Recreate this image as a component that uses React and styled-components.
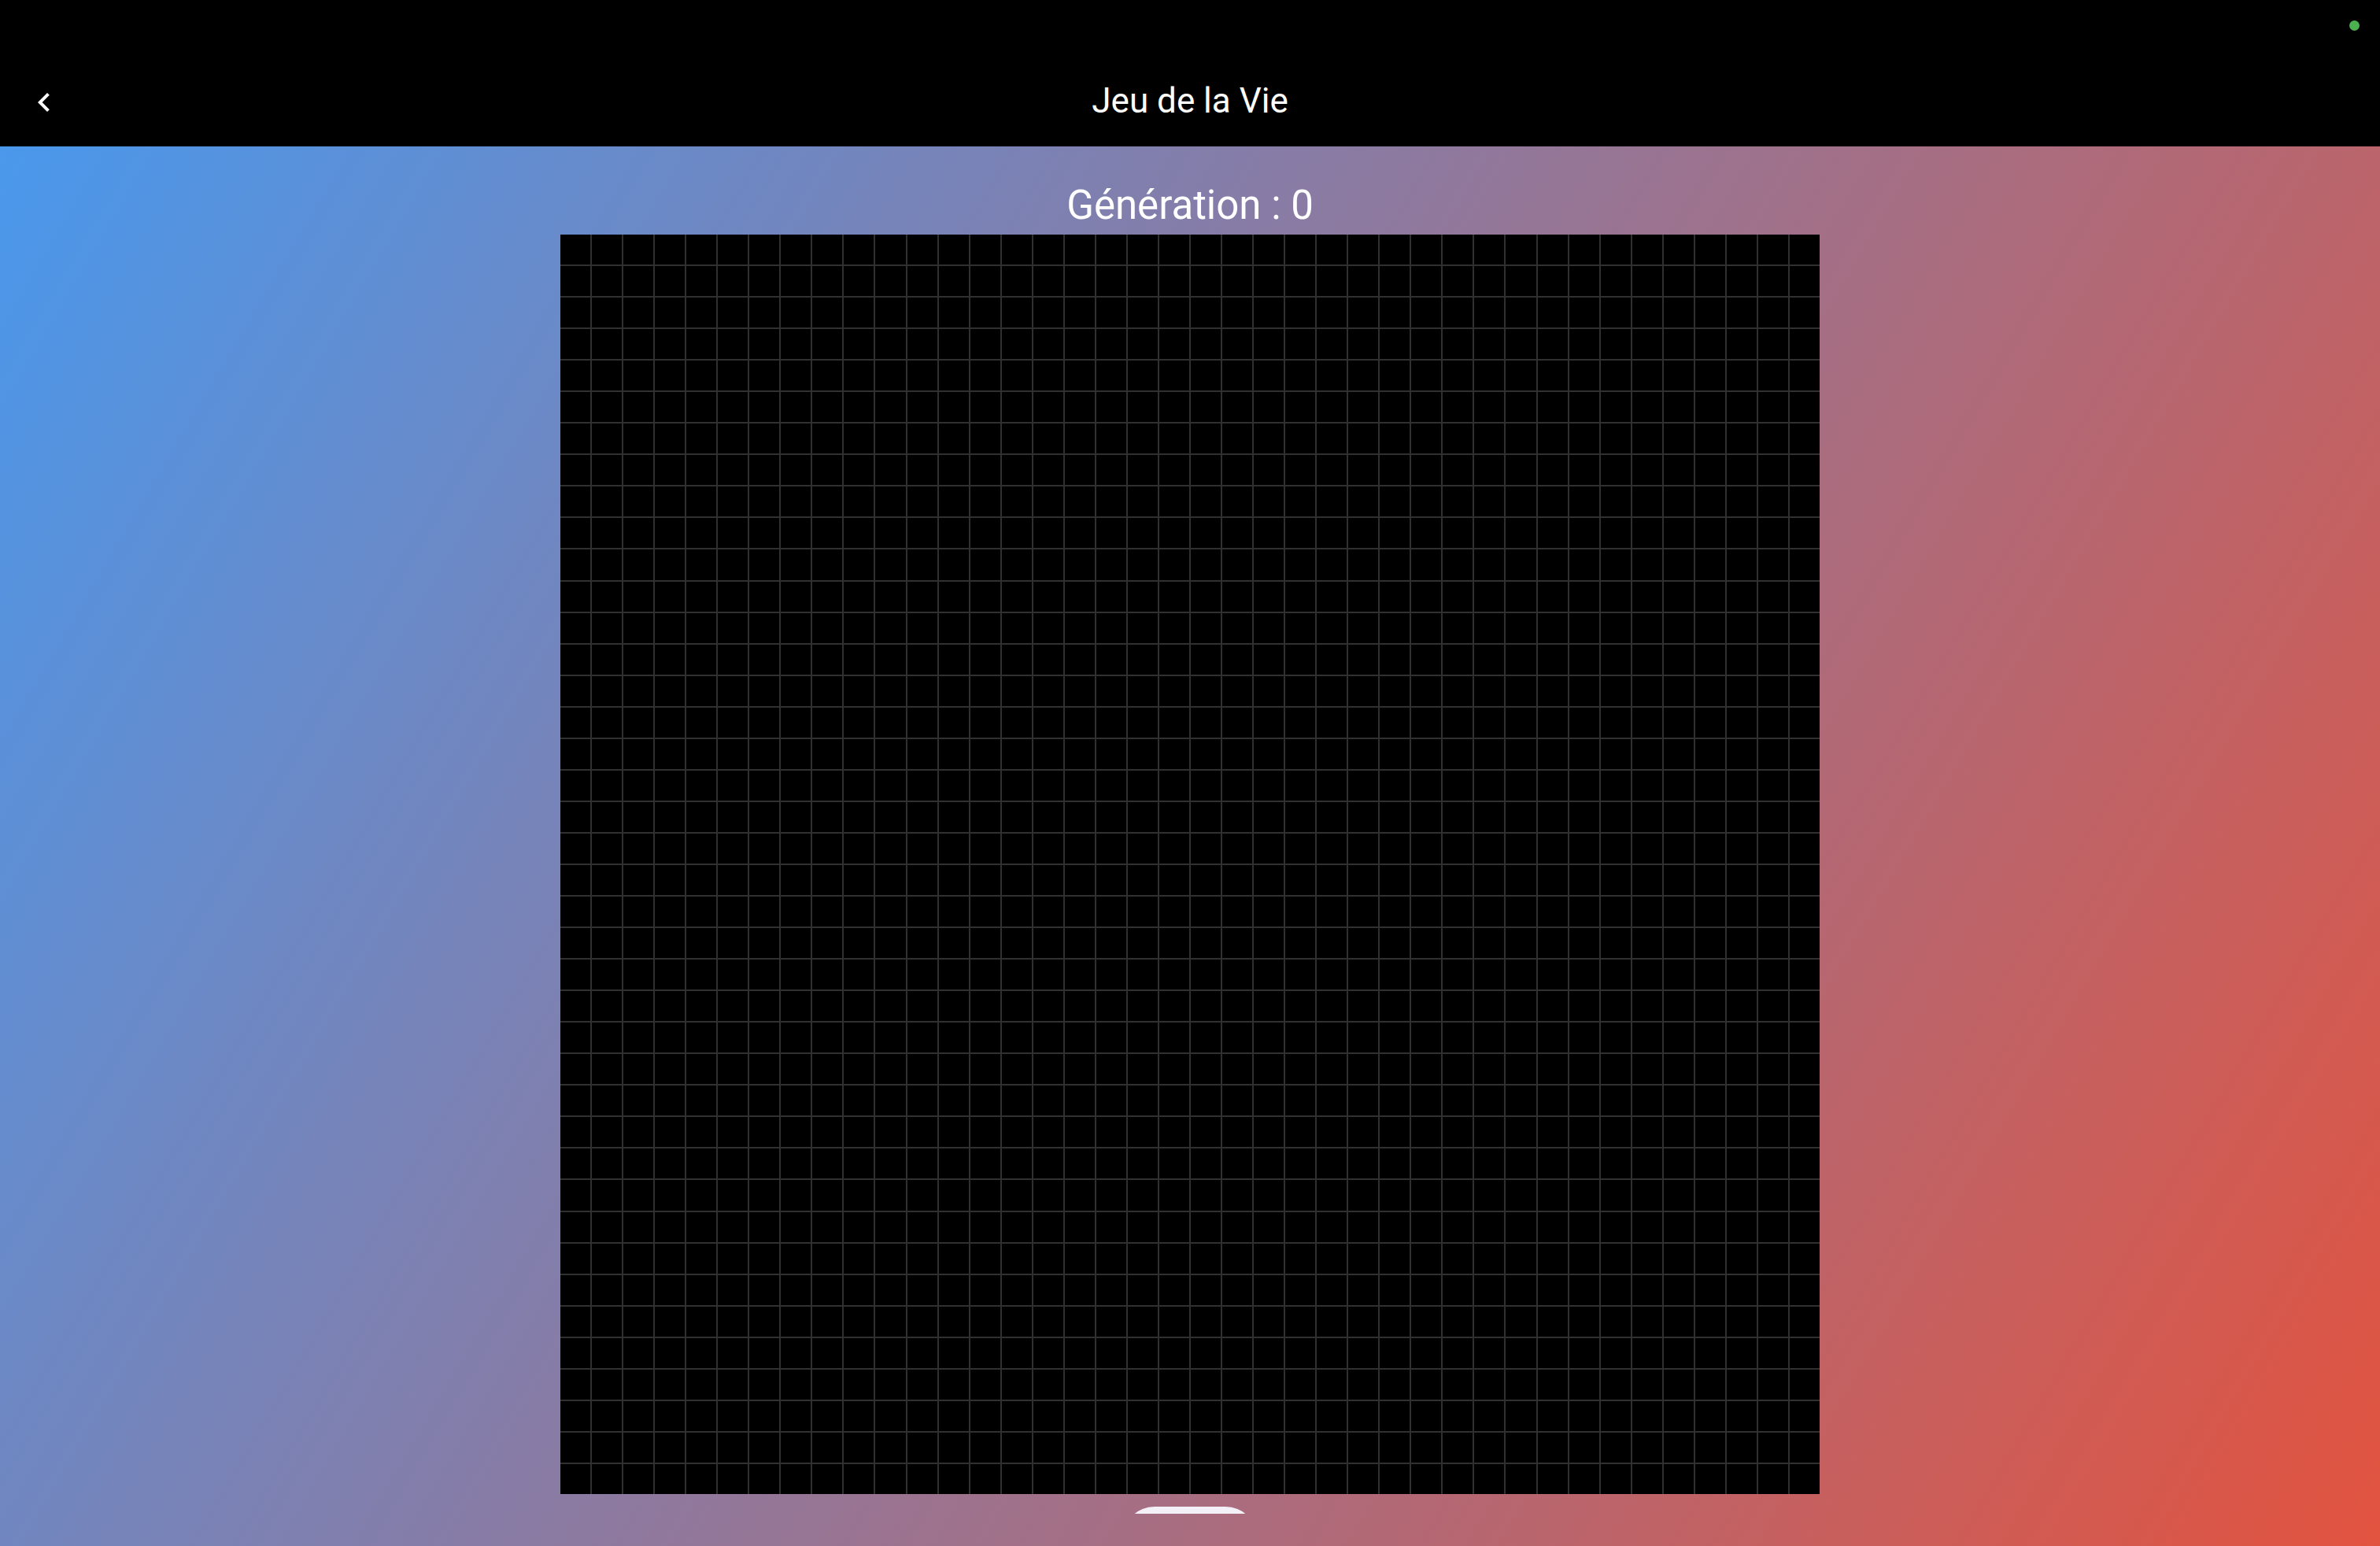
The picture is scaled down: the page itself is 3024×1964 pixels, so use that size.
import React from "react";
import styled, { createGlobalStyle } from "styled-components";

const GlobalStyle = createGlobalStyle`
  html, body, #root {
    margin: 0;
    padding: 0;
    height: 100%;
  }
  body {
    background: #000;
    font-family: Roboto, "Noto Sans", "Liberation Sans", sans-serif;
    -webkit-font-smoothing: antialiased;
  }
  * { box-sizing: border-box; }
`;

const Screen = styled.div`
  display: flex;
  flex-direction: column;
  height: 100vh;
  width: 100%;
  overflow: hidden;
`;

const Header = styled.header`
  flex: 0 0 186px;
  display: flex;
  flex-direction: column;
  background: #000;
`;

const StatusBar = styled.div`
  height: 64px;
  display: flex;
  justify-content: flex-end;
  align-items: flex-start;
  padding: 26px 26px 0 0;
`;

const StatusDot = styled.span`
  width: 13px;
  height: 13px;
  border-radius: 50%;
  background: #4caf50;
`;

const Toolbar = styled.div`
  flex: 1;
  display: grid;
  grid-template-columns: 1fr auto 1fr;
  align-items: center;
  padding: 10px 32px 0 32px;
`;

const BackButton = styled.button`
  width: 48px;
  height: 48px;
  padding: 0;
  border: none;
  background: transparent;
  color: #fff;
  display: flex;
  align-items: center;
  justify-content: center;
  cursor: pointer;
  justify-self: start;
`;

const Title = styled.h1`
  margin: 0;
  font-family: Roboto, "Noto Sans", sans-serif;
  font-weight: 400;
  font-size: 44px;
  line-height: 52px;
  color: #fff;
  margin-top: -4px;
`;

const Body = styled.main`
  flex: 1;
  background: linear-gradient(120.46deg, #4a98ec 0%, #e2533f 100%);
`;

const Content = styled.div`
  height: 1737px;
  overflow: hidden;
  display: flex;
  flex-direction: column;
  align-items: center;
  padding-top: 46px;
`;

const Generation = styled.div`
  font-family: Roboto, "Noto Sans", sans-serif;
  font-size: 51px;
  line-height: 58px;
  color: #fff;
  margin-bottom: 8px;
`;

const Board = styled.div`
  width: 1600px;
  height: 1600px;
  display: grid;
  grid-template-columns: repeat(${(p) => p.$size}, 1fr);
  grid-template-rows: repeat(${(p) => p.$size}, 1fr);
  gap: 2px;
  background: #303030;
  flex: 0 0 auto;
`;

const Cell = styled.div`
  background: ${(p) => (p.$alive ? "#fff" : "#000")};
`;

const Controls = styled.div`
  display: flex;
  gap: 24px;
  margin-top: 16px;
`;

const PillButton = styled.button`
  width: 170px;
  height: 80px;
  border-radius: 40px;
  border: none;
  background: #f4f0f8;
  cursor: pointer;
`;

const SIZE = 40;

export default function App() {
  const cells = Array.from({ length: SIZE * SIZE }, (_, i) => i);
  return (
    <>
      <GlobalStyle />
      <Screen>
        <Header>
          <StatusBar>
            <StatusDot />
          </StatusBar>
          <Toolbar>
            <BackButton aria-label="Retour">
              <svg width="48" height="48" viewBox="0 0 24 24" fill="currentColor">
                <path d="M15.41 7.41 14 6l-6 6 6 6 1.41-1.41L10.83 12z" />
              </svg>
            </BackButton>
            <Title>Jeu de la Vie</Title>
            <span />
          </Toolbar>
        </Header>
        <Body>
          <Content>
            <Generation>Génération : 0</Generation>
            <Board $size={SIZE}>
              {cells.map((i) => (
                <Cell key={i} $alive={false} />
              ))}
            </Board>
            <Controls>
              <PillButton aria-label="Démarrer" />
            </Controls>
          </Content>
        </Body>
      </Screen>
    </>
  );
}
